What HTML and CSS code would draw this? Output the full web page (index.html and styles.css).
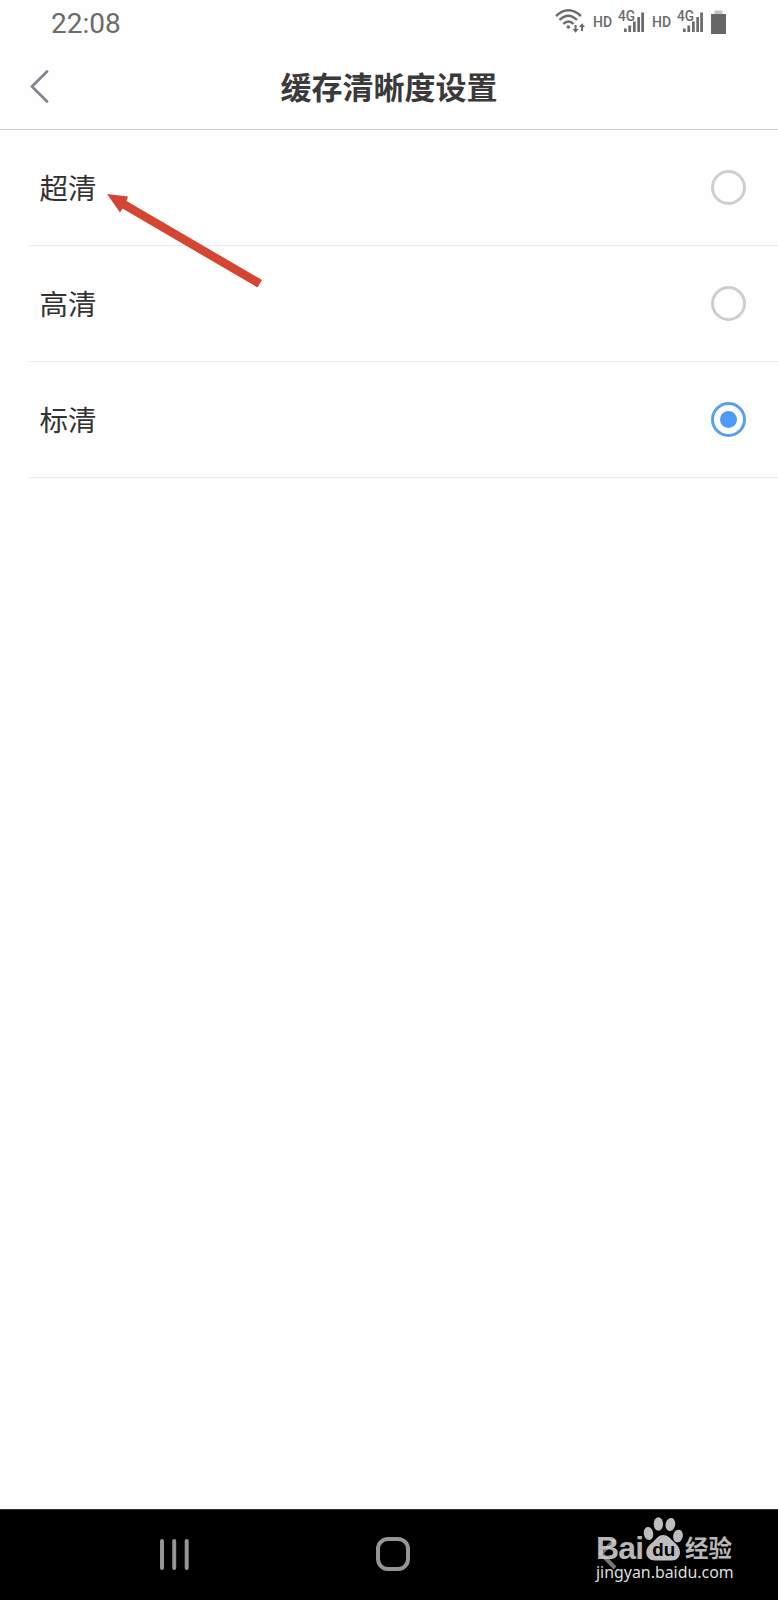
FILE: index.html
```html
<!DOCTYPE html>
<html lang="zh-CN">
<head>
    <meta charset="UTF-8">
    <meta name="viewport" content="width=device-width, initial-scale=1.0">
    <title>缓存清晰度设置</title>
    <link rel="stylesheet" href="styles.css">
</head>
<body>
    <div class="phone">
        <div class="status-bar">
            <span class="time">22:08</span>
            <div class="status-icons">
                <svg class="wifi" width="30" height="26" viewBox="0 0 30 26">
                    <g fill="none" stroke="#6b6b6b" stroke-width="2.4">
                        <path d="M1 8 Q13.5 -3.5 26 8"/>
                        <path d="M4.5 12 Q13.5 3.5 22 12"/>
                        <path d="M8.3 16 Q13.5 11 18.5 16"/>
                    </g>
                    <circle cx="13.3" cy="19" r="1.8" fill="#6b6b6b"/>
                    <path d="M19.6 17h2v4h2l-3 3.8-3-3.8h2z M26 23h2v-4h2l-3-3.8-3 3.8h2z" fill="#6b6b6b"/>
                </svg>
                <span class="hd">HD</span>
                <svg class="signal" width="28" height="26" viewBox="0 0 28 26">
                    <text class="net" x="0" y="13" textLength="17" lengthAdjust="spacingAndGlyphs">4G</text>
                    <path d="M6 20.5h2.7V24H6z M10.4 17.5h2.7V24h-2.7z M15 13.5h2.7V24H15z M19.3 9h2.7v15h-2.7z M23.2 4.5H26V24h-2.8z" fill="#6b6b6b"/>
                </svg>
                <span class="hd">HD</span>
                <svg class="signal" width="28" height="26" viewBox="0 0 28 26">
                    <text class="net" x="0" y="13" textLength="17" lengthAdjust="spacingAndGlyphs">4G</text>
                    <path d="M6 20.5h2.7V24H6z M10.4 17.5h2.7V24h-2.7z M15 13.5h2.7V24H15z M19.3 9h2.7v15h-2.7z M23.2 4.5H26V24h-2.8z" fill="#6b6b6b"/>
                </svg>
                <svg class="battery" width="15" height="26" viewBox="0 0 15 26">
                    <path d="M3.5 2.5h8v4h-8z" fill="#c4c4c4"/>
                    <path d="M0 6h15v20H0z" fill="#666"/>
                </svg>
            </div>
        </div>

        <div class="header">
            <svg class="back" width="20" height="34" viewBox="0 0 20 34">
                <path d="M17 2.5 L2 17.5 L17 32.5" fill="none" stroke="#85838f" stroke-width="2.7" stroke-linecap="round" stroke-linejoin="round"/>
            </svg>
            <h1 class="title">缓存清晰度设置</h1>
        </div>

        <div class="options">
            <div class="option">
                <span class="label">超清</span>
                <span class="radio"></span>
            </div>
            <div class="option">
                <span class="label">高清</span>
                <span class="radio"></span>
            </div>
            <div class="option">
                <span class="label">标清</span>
                <span class="radio checked"></span>
            </div>
            <svg class="arrow" width="156" height="95" viewBox="0 0 156 95">
                <path d="M0 0 L21 2.5 L19.5 7 L155 86 L150.5 93.5 L15.5 14.5 L13 18.5 Z" fill="#d44534"/>
            </svg>
        </div>

        <div class="nav-bar">
            <svg class="recents" width="30" height="31" viewBox="0 0 30 31">
                <path d="M2 2v27 M14.2 2v27 M26.7 2v27" stroke="#959595" stroke-width="4" stroke-linecap="round"/>
            </svg>
            <span class="home"></span>
            <svg class="nav-back" width="20" height="32" viewBox="0 0 20 32">
                <path d="M17 2 L3 15.5 L17 30" fill="none" stroke="#777" stroke-width="4"/>
            </svg>
        </div>

        <!-- watermark -->
        <div class="watermark">
            <div class="brand">
                <span class="bai">Bai</span>
                <svg class="paw" width="40" height="44" viewBox="0 0 40 44">
                    <g fill="#bdbdbd">
                        <ellipse cx="5.5" cy="16.5" rx="4.7" ry="6.6" transform="rotate(-10 5.5 16.5)"/>
                        <ellipse cx="15.4" cy="7" rx="4.7" ry="6.8"/>
                        <ellipse cx="27.4" cy="7.5" rx="4.8" ry="6.6" transform="rotate(12 27.4 7.5)"/>
                        <ellipse cx="35" cy="19" rx="4.8" ry="6.4" transform="rotate(12 35 19)"/>
                        <path d="M20.5 18 C25.5 18 27.5 22 31 25 C34 27.5 37 31 37 35.5 C37 40 33.5 43.5 29 43.5 H12 C7 43.5 3.3 40 3.3 35.5 C3.3 31 6.5 27.5 10 25 C13.5 21.5 15.5 18 20.5 18 Z"/>
                    </g>
                    <text class="du" x="9.3" y="39" textLength="23" lengthAdjust="spacingAndGlyphs">du</text>
                </svg>
                <span class="jingyan">经验</span>
            </div>
            <div class="url">jingyan.baidu.com</div>
        </div>
    </div>
</body>
</html>
```
FILE: styles.css
```css
* {
    margin: 0;
    padding: 0;
    box-sizing: border-box;
}

body {
    font-family: 'Roboto', 'Noto Sans CJK SC', sans-serif;
    background: #fefefe;
    color: #333;
}

.phone {
    position: relative;
    display: flex;
    flex-direction: column;
    width: 778px;
    height: 1600px;
    overflow: hidden;
}

/* Status bar */
.status-bar {
    display: flex;
    justify-content: space-between;
    height: 46px;
    padding: 0 51px;
    color: #6b6b6b;
}

.time {
    font-size: 28px;
    line-height: 48px;
}

.status-icons {
    display: flex;
    padding-top: 8px;
}

.hd {
    width: 20px;
    margin-left: 8px;
    font-size: 14px;
    font-weight: 500;
    line-height: 28px;
}

.signal {
    margin-left: 5px;
}

.signal + .hd {
    margin-left: 6px;
}

.net {
    font-size: 14.5px;
    font-weight: 500;
    fill: #6b6b6b;
}

.battery {
    margin-left: 6px;
    margin-right: 1px;
}

/* Header */
.header {
    display: grid;
    grid-template-columns: 60px 1fr 60px;
    align-items: center;
    height: 84px;
    border-bottom: 1px solid #cfcfcf;
}

.back {
    margin-left: 30px;
    margin-bottom: 3px;
}

.title {
    padding-top: 3px;
    font-size: 31px;
    font-weight: bold;
    line-height: 40px;
    text-align: center;
    color: #3a3a3a;
}

/* Options */
.options {
    position: relative;
    flex-grow: 1;
}

.option {
    display: flex;
    justify-content: space-between;
    align-items: center;
    height: 116px;
    margin-left: 29px;
    padding: 0 32px 0 10.5px;
    border-bottom: 1px solid #ececec;
}

.label {
    padding-top: 4px;
    font-size: 28.5px;
    line-height: 40px;
}

.radio {
    width: 35px;
    height: 35px;
    border: 3px solid #cecece;
    border-radius: 50%;
}

.radio.checked {
    display: flex;
    justify-content: center;
    align-items: center;
    border-color: #5a9fea;
}

.radio.checked::after {
    content: "";
    width: 17px;
    height: 17px;
    border-radius: 50%;
    background: #4f9cf8;
}

/* Arrow lies over the first two rows */
.arrow {
    position: absolute;
    left: 107px;
    top: 64px;
}

/* Navigation bar */
.nav-bar {
    display: flex;
    justify-content: space-between;
    align-items: center;
    height: 91px;
    padding: 0 160px 2px;
    background: #000;
    border-top: 1px solid #2b2b2b;
}

.home {
    width: 34px;
    height: 34px;
    margin-right: 3px;
    border: 4px solid #959595;
    border-radius: 12px;
}

/* Watermark lies over the navigation bar */
.watermark {
    position: absolute;
    left: 596px;
    top: 1516px;
    width: 142px;
    color: rgba(210, 210, 210, 0.88);
}

.brand {
    display: flex;
    align-items: flex-end;
    height: 45px;
}

.bai {
    width: 47px;
    margin-bottom: -4px;
    font-family: 'Liberation Sans', sans-serif;
    font-size: 32px;
    font-weight: bold;
    line-height: 34px;
    letter-spacing: -0.8px;
}

.du {
    font-family: 'Liberation Sans', sans-serif;
    font-size: 19px;
    font-weight: bold;
    fill: #000;
}

.jingyan {
    margin-left: 2px;
    font-size: 23.5px;
    font-weight: bold;
    line-height: 24px;
}

.url {
    font-family: 'Noto Sans', sans-serif;
    font-size: 15.9px;
    line-height: 22px;
    color: #dedede;
}
```
